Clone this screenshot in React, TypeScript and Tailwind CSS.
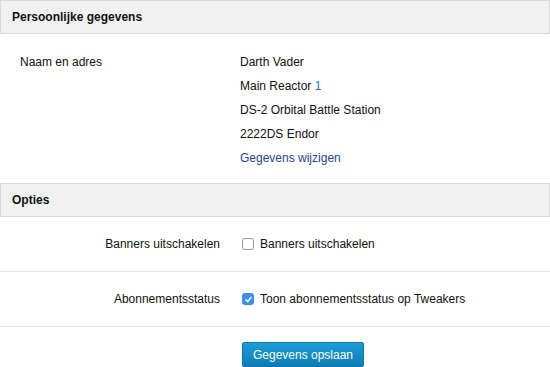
import React from "react";

export default function App() {
  return (
    <div className="w-[550px] h-[367px] overflow-hidden bg-white text-[12px] text-[#111] font-['Liberation_Sans',Arial,sans-serif]">
      <div className="h-[34px] w-[550px] border border-[#d9d9d9] bg-[#f1f1f1] flex items-center px-[11px] font-bold text-[12px]">
        Persoonlijke gegevens
      </div>
      <div className="flex pt-[16px] pb-[13px]">
        <div className="w-[240px] pl-[20px] leading-[24px]">Naam en adres</div>
        <div className="flex flex-col leading-[24px]">
          <span>Darth Vader</span>
          <span>
            Main Reactor <span className="text-[#1a6fc0]">1</span>
          </span>
          <span>DS-2 Orbital Battle Station</span>
          <span>2222DS Endor</span>
          <span className="text-[#1d4698]">Gegevens wijzigen</span>
        </div>
      </div>
      <div className="h-[34px] w-[550px] border border-[#d9d9d9] bg-[#f1f1f1] flex items-center px-[11px] font-bold text-[12px]">
        Opties
      </div>
      <div className="flex items-center h-[55px] border-b border-[#e3e3e3]">
        <div className="w-[220px] text-right">Banners uitschakelen</div>
        <div className="flex items-center pl-[22px]">
          <span className="w-[12px] h-[12px] rounded-[3px] border border-[#9a9a9a] bg-white mr-[6px]"></span>
          <span>Banners uitschakelen</span>
        </div>
      </div>
      <div className="flex items-center h-[55px] border-b border-[#e3e3e3]">
        <div className="w-[220px] text-right">Abonnementsstatus</div>
        <div className="flex items-center pl-[22px]">
          <span className="w-[12px] h-[12px] rounded-[3px] bg-[#3b8ff0] mr-[6px] flex items-center justify-center">
            <svg width="9" height="9" viewBox="0 0 10 10">
              <path d="M2.2 5.4 L4.2 7.4 L7.8 2.6" fill="none" stroke="white" strokeWidth="1.6" strokeLinecap="round" strokeLinejoin="round" />
            </svg>
          </span>
          <span>Toon abonnementsstatus op Tweakers</span>
        </div>
      </div>
      <div className="pt-[15px] pl-[242px]">
        <div className="w-[122px] h-[25px] rounded-[2px] bg-gradient-to-b from-[#1c9ed8] to-[#0c7cb5] border border-[#0b74aa] text-white flex items-center justify-center">
          Gegevens opslaan
        </div>
      </div>
    </div>
  );
}
